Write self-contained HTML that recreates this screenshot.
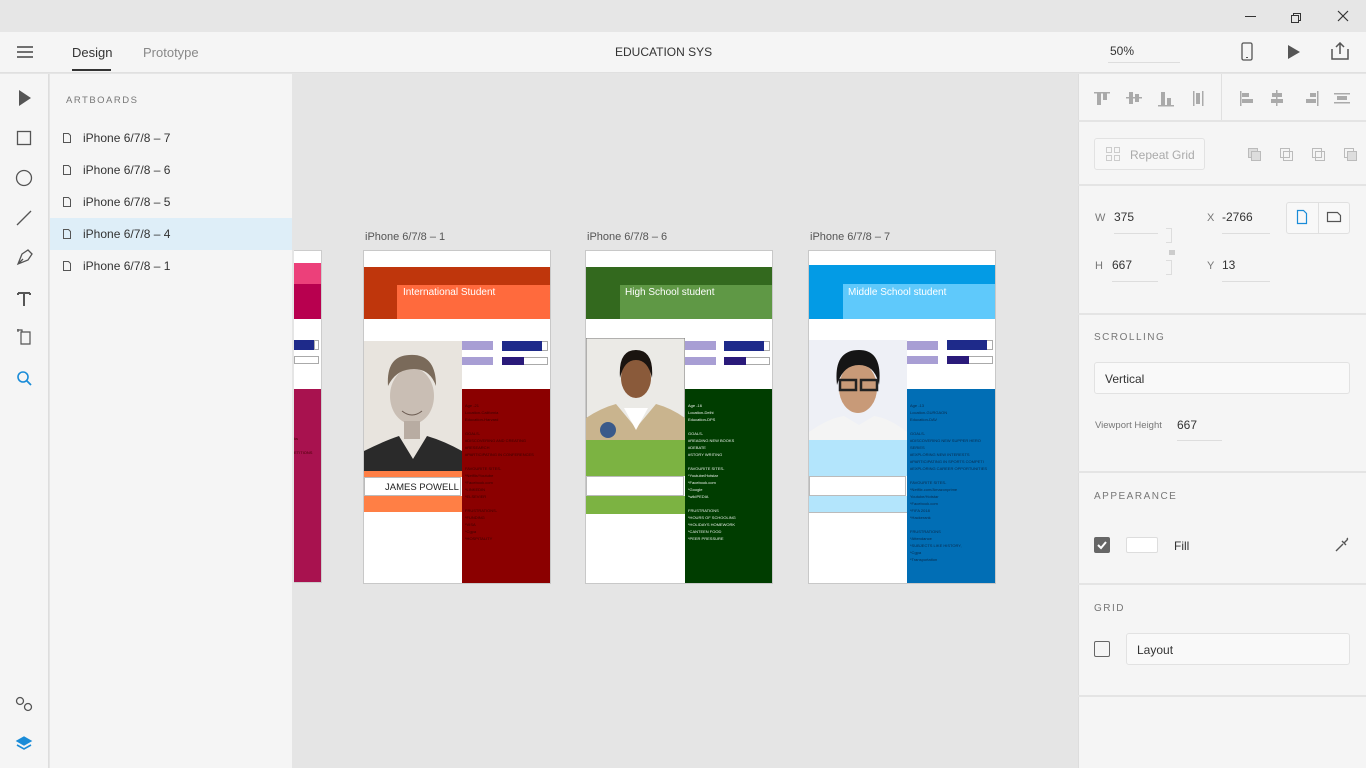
<!DOCTYPE html>
<html><head><meta charset="utf-8"><style>
*{margin:0;padding:0;box-sizing:border-box}
body{width:1366px;height:768px;overflow:hidden;background:#e5e5e5;font-family:"Liberation Sans",sans-serif;position:relative;color:#333}
.a{position:absolute}
.t{font-size:12px;color:#333;white-space:nowrap}
.sm{font-size:4px;line-height:7px;white-space:pre;color:#3a0000}
.lbl{font-size:10px;letter-spacing:1.5px;color:#777}
.hr{position:absolute;left:1078px;width:288px;height:2px;background:#e4e4e4}
</style></head><body>
<!-- title bar -->
<div class="a" style="left:0;top:0;width:1366px;height:32px;background:#e6e6e6"></div>
<div class="a" style="left:1245px;top:16px;width:11px;height:1px;background:#333"></div>
<div class="a" style="left:1293px;top:13px;width:8px;height:8px;border:1px solid #333;background:#e6e6e6"></div>
<div class="a" style="left:1291px;top:15px;width:8px;height:8px;border:1px solid #333;background:#e6e6e6"></div>
<svg class="a" style="left:1337px;top:10px" width="12" height="12"><path d="M1 1L11 11M11 1L1 11" stroke="#333" stroke-width="1.2"/></svg>
<!-- header -->
<div class="a" style="left:0;top:32px;width:1366px;height:41px;background:#f5f5f5;border-bottom:1px solid #e0e0e0"></div>
<svg class="a" style="left:17px;top:45px" width="16" height="14"><path d="M0 2H16M0 7H16M0 12H16" stroke="#444" stroke-width="1.5"/></svg>
<div class="a t" style="left:72px;top:45px;font-size:13px">Design</div>
<div class="a" style="left:72px;top:69px;width:39px;height:2px;background:#333"></div>
<div class="a t" style="left:143px;top:45px;font-size:13px;color:#888">Prototype</div>
<div class="a t" style="left:615px;top:45px">EDUCATION SYS</div>
<div class="a t" style="left:1110px;top:44px">50%</div>
<div class="a" style="left:1108px;top:62px;width:72px;height:1px;background:#ddd"></div>
<svg class="a" style="left:1240px;top:42px" width="16" height="20"><rect x="2" y="1" width="10" height="17" rx="1.5" fill="none" stroke="#555" stroke-width="1.3"/><path d="M6 15.5H8" stroke="#555"/></svg>
<svg class="a" style="left:1286px;top:44px" width="16" height="16"><path d="M2 1L14 8L2 15Z" fill="#555"/></svg>
<svg class="a" style="left:1331px;top:42px" width="18" height="18"><path d="M1 7V17H17V7M9 12V2M5 5L9 1L13 5" fill="none" stroke="#555" stroke-width="1.5"/></svg>
<!-- left toolbar -->
<div class="a" style="left:0;top:74px;width:49px;height:694px;background:#f5f5f5;border-right:1px solid #ddd"></div>
<svg class="a" style="left:0;top:74px" width="49" height="694" fill="none" stroke="#555" stroke-width="1.3">
<path d="M19 16L31 24L19 32Z" fill="#555" stroke="none"/>
<rect x="17.5" y="57.5" width="13" height="13"/>
<circle cx="24" cy="104" r="7.5"/>
<path d="M17 151L31 137"/>
<path d="M18 190L22 180L28 176L32 180L28 186Z M18 190L23 185"/>
<path d="M18 219H30M24 219V232M18 219V221M30 219V221" stroke-width="2"/>
<path d="M18 256H22V258M21 258H30V270H21Z M17 256H19M18 255V258" stroke-width="1.2"/>
<circle cx="23" cy="303" r="5" stroke="#1a8cd8" stroke-width="1.6"/><path d="M27 307L31 311" stroke="#1a8cd8" stroke-width="1.8"/>
<circle cx="20" cy="627" r="3.5"/><circle cx="28" cy="633" r="3.5"/>
<path d="M17 667L24 663L31 667L24 671Z" fill="#1a8cd8" stroke="#1a8cd8"/><path d="M17 671L24 675L31 671" stroke="#1a8cd8" stroke-width="1.6"/>
</svg>
<!-- artboards panel -->
<div class="a" style="left:50px;top:74px;width:242px;height:694px;background:#f5f5f5"></div>
<div class="a lbl" style="left:66px;top:95px;font-size:9.5px">ARTBOARDS</div>
<div class="a" style="left:50px;top:218px;width:242px;height:32px;background:#deeef8"></div>
<div class="a" style="left:0;top:0"></div>
<svg class="a" style="left:62px;top:133px" width="10" height="140" fill="none" stroke="#555"><path d="M1.5 0.5H6.5L8.5 2.5V9.5H1.5Z"/><path d="M1.5 32.5H6.5L8.5 34.5V41.5H1.5Z"/><path d="M1.5 64.5H6.5L8.5 66.5V73.5H1.5Z"/><path d="M1.5 96.5H6.5L8.5 98.5V105.5H1.5Z"/><path d="M1.5 128.5H6.5L8.5 130.5V137.5H1.5Z"/></svg>
<div class="a t" style="left:83px;top:131px">iPhone 6/7/8 – 7</div>
<div class="a t" style="left:83px;top:163px">iPhone 6/7/8 – 6</div>
<div class="a t" style="left:83px;top:195px">iPhone 6/7/8 – 5</div>
<div class="a t" style="left:83px;top:227px">iPhone 6/7/8 – 4</div>
<div class="a t" style="left:83px;top:259px">iPhone 6/7/8 – 1</div>

<!-- partial board -->
<div class="a" style="left:294px;top:250px;width:28px;height:333px;background:#fff;border:1px solid #ccc;border-left:none"></div>
<div class="a" style="left:294px;top:263px;width:27px;height:21px;background:#ec407a"></div>
<div class="a" style="left:294px;top:284px;width:27px;height:35px;background:#b8004f"></div>
<div class="a" style="left:294px;top:340px;width:20px;height:10px;background:#1e2a8a"></div>
<div class="a" style="left:314px;top:340px;width:5px;height:10px;border:1px solid #aaa"></div>
<div class="a" style="left:294px;top:356px;width:25px;height:8px;border:1px solid #aaa"></div>
<div class="a" style="left:294px;top:389px;width:27px;height:193px;background:#a8124f"></div>
<div class="a sm" style="left:294px;top:435px;color:#400">ks

ETITIONS</div>

<!-- board 1 -->
<div class="a" style="left:365px;top:231px;font-size:11px;color:#555">iPhone 6/7/8 – 1</div>
<div class="a" style="left:363px;top:250px;width:188px;height:334px;background:#fff;border:1px solid #c8c8c8"></div>
<div class="a" style="left:364px;top:267px;width:186px;height:52px;background:#bf360c"></div>
<div class="a" style="left:397px;top:285px;width:153px;height:34px;background:#ff6a3d"></div>
<div class="a" style="left:403px;top:287px;font-size:10px;color:#fff">International Student</div>
<svg class="a" style="left:364px;top:341px" width="98" height="130"><rect width="98" height="130" fill="#e8e4de"/><path d="M0 130V110Q20 100 35 95L49 118L63 95Q80 100 98 110V130Z" fill="#2a2a2a"/><ellipse cx="48" cy="55" rx="22" ry="28" fill="#c9beb4"/><path d="M24 45Q22 15 45 14Q72 12 72 45Q66 28 50 28Q32 28 24 45Z" fill="#7a6a5a"/><path d="M38 70Q48 78 58 70" stroke="#6a5a50" fill="none"/><rect x="40" y="80" width="16" height="18" fill="#b8aca2"/></svg>
<div class="a" style="left:462px;top:341px;width:31px;height:9px;background:#a89ed4"></div>
<div class="a" style="left:462px;top:357px;width:31px;height:8px;background:#a89ed4"></div>
<div class="a" style="left:502px;top:341px;width:46px;height:10px;background:#fff;border:1px solid #aaa"></div>
<div class="a" style="left:502px;top:341px;width:40px;height:10px;background:#1e2a8a"></div>
<div class="a" style="left:502px;top:357px;width:46px;height:8px;background:#fff;border:1px solid #aaa"></div>
<div class="a" style="left:502px;top:357px;width:22px;height:8px;background:#2a1a7a"></div>
<div class="a" style="left:462px;top:389px;width:88px;height:194px;background:#8b0000"></div>
<div class="a sm" style="left:465px;top:402px">Age -21
Location-California
Education-Harvard

GOALS-
#DISCOVERING AND CREATING
#RESEARCH
#PARTICIPATING IN CONFERENCES

FAVOURITE SITES-
*Netflix/Youtube
*Facebook.com
*LINKEDIN
*ELSEVIER

FRUSTRATIONS-
*FUNDING
*VISA
*Cgpa
*HOSPITALITY</div>
<div class="a" style="left:364px;top:471px;width:98px;height:6px;background:#ff7f45"></div>
<div class="a" style="left:364px;top:477px;width:97px;height:19px;background:#fff;border:1px solid #bbb"></div>
<div class="a" style="left:385px;top:482px;font-size:9.5px;color:#222">JAMES POWELL</div>
<div class="a" style="left:364px;top:496px;width:98px;height:16px;background:#ff7f45"></div>

<!-- board 6 -->
<div class="a" style="left:587px;top:231px;font-size:11px;color:#555">iPhone 6/7/8 – 6</div>
<div class="a" style="left:585px;top:250px;width:188px;height:334px;background:#fff;border:1px solid #c8c8c8"></div>
<div class="a" style="left:586px;top:267px;width:186px;height:52px;background:#33691e"></div>
<div class="a" style="left:620px;top:285px;width:152px;height:34px;background:#5f9845"></div>
<div class="a" style="left:625px;top:287px;font-size:10px;color:#fff">High School student</div>
<svg class="a" style="left:586px;top:338px" width="99" height="102"><rect width="99" height="102" fill="#ebeae6" stroke="#777"/><path d="M0 102V80Q15 70 30 66L50 90L70 66Q85 70 99 80V102Z" fill="#c9b48e"/><path d="M38 70L50 92L62 70Z" fill="#fff"/><ellipse cx="50" cy="40" rx="15" ry="20" fill="#8a5a3a"/><path d="M34 40Q32 12 50 12Q68 12 66 40Q62 22 50 22Q38 22 34 40Z" fill="#1a1410"/><circle cx="22" cy="92" r="8" fill="#3a5a8a"/></svg>
<div class="a" style="left:685px;top:341px;width:31px;height:9px;background:#a89ed4"></div>
<div class="a" style="left:685px;top:357px;width:31px;height:8px;background:#a89ed4"></div>
<div class="a" style="left:724px;top:341px;width:46px;height:10px;background:#fff;border:1px solid #aaa"></div>
<div class="a" style="left:724px;top:341px;width:40px;height:10px;background:#1e2a8a"></div>
<div class="a" style="left:724px;top:357px;width:46px;height:8px;background:#fff;border:1px solid #aaa"></div>
<div class="a" style="left:724px;top:357px;width:22px;height:8px;background:#2a1a7a"></div>
<div class="a" style="left:685px;top:389px;width:87px;height:194px;background:#003d00"></div>
<div class="a sm" style="left:688px;top:402px;color:#e8f0e8">Age -16
Location-Delhi
Education-DPS

GOALS-
#READING NEW BOOKS
#DEBATE
#STORY WRITING

FAVOURITE SITES-
*Youtube/Hotstar
*Facebook.com
*Google
*wikIPEDIA

FRUSTRATIONS
*HOURS OF SCHOOLING
*HOLIDAYS HOMEWORK
*CANTEEN FOOD
*PEER PRESSURE</div>
<div class="a" style="left:586px;top:440px;width:99px;height:36px;background:#7cb342"></div>
<div class="a" style="left:586px;top:476px;width:98px;height:20px;background:#fff;border:1px solid #bbb"></div>
<div class="a" style="left:586px;top:496px;width:99px;height:18px;background:#7cb342"></div>

<!-- board 7 -->
<div class="a" style="left:810px;top:231px;font-size:11px;color:#555">iPhone 6/7/8 – 7</div>
<div class="a" style="left:808px;top:250px;width:188px;height:334px;background:#fff;border:1px solid #c8c8c8"></div>
<div class="a" style="left:809px;top:265px;width:186px;height:54px;background:#039be5"></div>
<div class="a" style="left:843px;top:284px;width:152px;height:35px;background:#5fc9fb"></div>
<div class="a" style="left:848px;top:287px;font-size:10px;color:#fff">Middle School student</div>
<svg class="a" style="left:809px;top:340px" width="98" height="100"><rect width="98" height="100" fill="#eef0f6"/><path d="M0 100V92Q20 78 35 76L50 85L65 76Q80 78 98 92V100Z" fill="#f4f4f4"/><ellipse cx="49" cy="48" rx="19" ry="25" fill="#c89a78"/><path d="M28 45Q24 10 50 10Q74 10 70 45Q66 25 50 25Q34 25 28 45Z" fill="#151515"/><rect x="31" y="40" width="16" height="10" fill="none" stroke="#222" stroke-width="2.5"/><rect x="52" y="40" width="16" height="10" fill="none" stroke="#222" stroke-width="2.5"/></svg>
<div class="a" style="left:907px;top:341px;width:31px;height:9px;background:#a89ed4"></div>
<div class="a" style="left:907px;top:356px;width:31px;height:8px;background:#a89ed4"></div>
<div class="a" style="left:947px;top:340px;width:46px;height:10px;background:#fff;border:1px solid #aaa"></div>
<div class="a" style="left:947px;top:340px;width:40px;height:10px;background:#1e2a8a"></div>
<div class="a" style="left:947px;top:356px;width:46px;height:8px;background:#fff;border:1px solid #aaa"></div>
<div class="a" style="left:947px;top:356px;width:22px;height:8px;background:#2a1a7a"></div>
<div class="a" style="left:907px;top:389px;width:88px;height:194px;background:#016eb5"></div>
<div class="a sm" style="left:910px;top:402px;color:#0a2a4a">Age -13
Location-GURGAON
Education-DAV

GOALS-
#DISCOVERING NEW SUPPER HERO
SERIES
#EXPLORING NEW INTERESTS
#PARTICIPATING IN SPORTS COMPETI
#EXPLORING CAREER OPPORTUNITIES

FAVOURITE SITES-
*Netflix.com/Amazonprime
Youtube/Hotstar
*Facebook.com
*FIFA 2018
*Hackerank

FRUSTRATIONS
*Attendance
*SUBJECTS LIKE HISTORY,
*Cgpa
*Transportation</div>
<div class="a" style="left:809px;top:440px;width:98px;height:36px;background:#b3e5fc"></div>
<div class="a" style="left:809px;top:476px;width:97px;height:20px;background:#fff;border:1px solid #bbb"></div>
<div class="a" style="left:809px;top:496px;width:98px;height:17px;background:#b3e5fc;border-bottom:1px solid #bbb"></div>

<!-- right panel -->
<div class="a" style="left:1078px;top:74px;width:288px;height:694px;background:#f5f5f5;border-left:1px solid #ddd"></div>
<div class="a" style="left:1221px;top:74px;width:1px;height:46px;background:#e0e0e0"></div>
<svg class="a" style="left:1078px;top:74px" width="288" height="110" fill="#aaa">
<rect x="16" y="18" width="16" height="1.5"/><rect x="19" y="19" width="4" height="12"/><rect x="25" y="19" width="4" height="7"/>
<rect x="48" y="23" width="16" height="1.5"/><rect x="51" y="18" width="4" height="12"/><rect x="57" y="20" width="4" height="8"/>
<rect x="80" y="31" width="16" height="1.5"/><rect x="83" y="18" width="4" height="13"/><rect x="89" y="24" width="4" height="7"/>
<rect x="115" y="17" width="1.5" height="15"/><rect x="118" y="19" width="4" height="11"/><rect x="124" y="17" width="1.5" height="15"/>
<rect x="162" y="17" width="1.5" height="15"/><rect x="164" y="19" width="7" height="4"/><rect x="164" y="25" width="11" height="4"/>
<rect x="198" y="16" width="1.5" height="16"/><rect x="194" y="19" width="10" height="4"/><rect x="193" y="25" width="12" height="4"/>
<rect x="239" y="17" width="1.5" height="15"/><rect x="232" y="19" width="6" height="4"/><rect x="228" y="25" width="10" height="4"/>
<rect x="256" y="19" width="16" height="1.5"/><rect x="259" y="22" width="10" height="4"/><rect x="256" y="28" width="16" height="1.5"/>
<g fill="none" stroke="#bbb"><rect x="170.5" y="74.5" width="9" height="9" fill="#ddd"/><rect x="173.5" y="77.5" width="9" height="9" fill="#ddd"/>
<rect x="202.5" y="74.5" width="9" height="9"/><rect x="205.5" y="77.5" width="9" height="9"/>
<rect x="234.5" y="74.5" width="9" height="9"/><rect x="237.5" y="77.5" width="9" height="9"/>
<rect x="266.5" y="74.5" width="9" height="9"/><rect x="269.5" y="77.5" width="9" height="9" fill="#ddd"/></g>
</svg>
<div class="hr" style="top:120px"></div>
<div class="a" style="left:1094px;top:138px;width:111px;height:32px;border:1px solid #e2e2e2;border-radius:3px;background:#f7f7f7"></div>
<svg class="a" style="left:1106px;top:147px" width="14" height="14" fill="none" stroke="#ccc"><rect x="0.5" y="0.5" width="5" height="5"/><rect x="8.5" y="0.5" width="5" height="5"/><rect x="0.5" y="8.5" width="5" height="5"/><rect x="8.5" y="8.5" width="5" height="5"/></svg>
<div class="a t" style="left:1130px;top:148px;color:#aaa">Repeat Grid</div>
<div class="hr" style="top:184px"></div>
<div class="a t" style="left:1095px;top:212px;font-size:11px;color:#777">W</div>
<div class="a t" style="left:1114px;top:210px">375</div>
<div class="a" style="left:1114px;top:233px;width:44px;height:1px;background:#ddd"></div>
<div class="a t" style="left:1207px;top:212px;font-size:11px;color:#777">X</div>
<div class="a t" style="left:1222px;top:210px">-2766</div>
<div class="a" style="left:1222px;top:233px;width:48px;height:1px;background:#ddd"></div>
<div class="a t" style="left:1095px;top:260px;font-size:11px;color:#777">H</div>
<div class="a t" style="left:1112px;top:258px">667</div>
<div class="a" style="left:1112px;top:281px;width:46px;height:1px;background:#ddd"></div>
<div class="a t" style="left:1207px;top:260px;font-size:11px;color:#777">Y</div>
<div class="a t" style="left:1222px;top:258px">13</div>
<div class="a" style="left:1222px;top:281px;width:48px;height:1px;background:#ddd"></div>
<div class="a" style="left:1166px;top:228px;width:6px;height:15px;border:1px solid #ddd;border-left:none"></div>
<div class="a" style="left:1166px;top:260px;width:6px;height:15px;border:1px solid #ddd;border-left:none"></div>
<div class="a" style="left:1169px;top:250px;width:6px;height:5px;background:#ccc"></div>
<div class="a" style="left:1286px;top:202px;width:64px;height:32px;border:1px solid #e0e0e0;border-radius:3px;background:#f8f8f8"></div>
<div class="a" style="left:1318px;top:203px;width:1px;height:30px;background:#e0e0e0"></div>
<svg class="a" style="left:1295px;top:209px" width="14" height="16"><path d="M2.5 1.5H8.5L11.5 4.5V14.5H2.5Z" fill="none" stroke="#1a8cd8" stroke-width="1.2"/></svg>
<svg class="a" style="left:1326px;top:210px" width="18" height="14"><path d="M1.5 2.5H11.5L14.5 5.5V11.5H1.5Z" fill="none" stroke="#555" stroke-width="1.2"/></svg>
<div class="hr" style="top:313px"></div>
<div class="a lbl" style="left:1094px;top:332px">SCROLLING</div>
<div class="a" style="left:1094px;top:362px;width:256px;height:32px;border:1px solid #e2e2e2;border-radius:3px;background:#f9f9f9"></div>
<div class="a t" style="left:1105px;top:372px">Vertical</div>
<div class="a t" style="left:1095px;top:420px;font-size:9.5px;color:#777">Viewport Height</div>
<div class="a t" style="left:1177px;top:418px">667</div>
<div class="a" style="left:1177px;top:440px;width:45px;height:1px;background:#ddd"></div>
<div class="hr" style="top:471px"></div>
<div class="a lbl" style="left:1094px;top:491px">APPEARANCE</div>
<div class="a" style="left:1094px;top:537px;width:16px;height:16px;background:#666;border-radius:2px"></div>
<svg class="a" style="left:1094px;top:537px" width="16" height="16"><path d="M4 8L7 11L12 5" stroke="#fff" stroke-width="2" fill="none"/></svg>
<div class="a" style="left:1126px;top:537px;width:32px;height:16px;background:#fff;border:1px solid #ddd;border-radius:2px"></div>
<div class="a t" style="left:1174px;top:539px">Fill</div>
<svg class="a" style="left:1334px;top:537px" width="16" height="16"><path d="M2 14L9 7M8 4L12 8M10 6L13 3Q14 2 13 1" stroke="#555" stroke-width="1.4" fill="none"/></svg>
<div class="hr" style="top:583px"></div>
<div class="a lbl" style="left:1094px;top:603px">GRID</div>
<div class="a" style="left:1094px;top:641px;width:16px;height:16px;border:1.5px solid #666;border-radius:2px"></div>
<div class="a" style="left:1126px;top:633px;width:224px;height:32px;border:1px solid #e2e2e2;border-radius:3px;background:#f9f9f9"></div>
<div class="a t" style="left:1137px;top:643px">Layout</div>
<div class="hr" style="top:695px"></div>
</body></html>
